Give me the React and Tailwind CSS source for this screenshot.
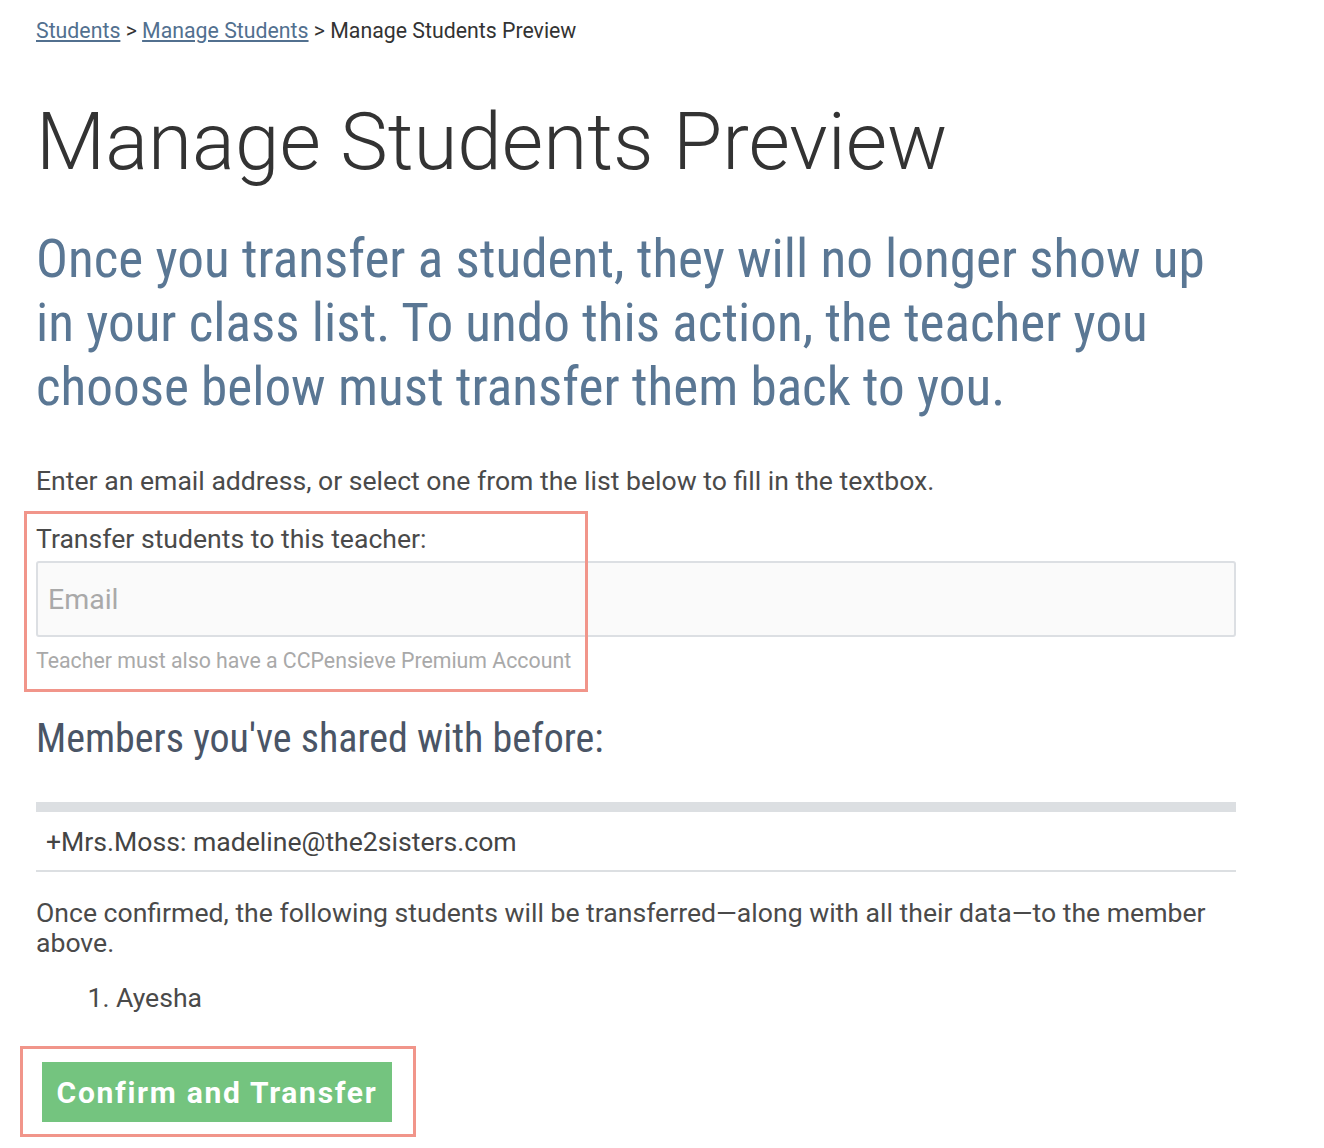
import React from "react";

export default function App() {
  return (
    <div className="min-h-[1148px] w-full bg-white font-['Roboto',sans-serif] text-[#4a4a4a]">
      <div className="w-[1236px] pl-9">
        <nav className="pt-[19px] text-[21.3px] leading-6 text-[#333]">
          <a href="#" className="text-[#52708f] underline underline-offset-2">Students</a>
          <span> &gt; </span>
          <a href="#" className="text-[#52708f] underline underline-offset-2">Manage Students</a>
          <span> &gt; Manage Students Preview</span>
        </nav>

        <h1 className="mt-[59px] text-[80px] font-light leading-none text-[#333]">Manage Students Preview</h1>

        <h2 className="mt-[45px] w-[1190px] font-['Roboto_Condensed',Roboto,sans-serif] text-[53.2px] leading-[64px] text-[#5a7794]">
          Once you transfer a student, they will no longer show up in your class list. To undo this action, the teacher you choose below must transfer them back to you.
        </h2>

        <p className="mt-[47px] text-[26.6px] leading-[30px]">Enter an email address, or select one from the list below to fill in the textbox.</p>

        <div className="relative mt-[28px]">
          <label className="block text-[26.6px] leading-[30px]">Transfer students to this teacher:</label>
          <input
            type="text"
            placeholder="Email"
            className="mt-[7px] block h-[76px] w-full rounded-[3px] border-2 border-[#dcdfe3] bg-[#fafafa] px-[10px] text-[28.5px] text-[#4a4a4a] placeholder:text-[#a9a9a9] outline-none"
          />
          <p className="mt-[12px] text-[21.3px] leading-6 text-[#a9a9a9]">Teacher must also have a CCPensieve Premium Account</p>
          <div className="pointer-events-none absolute left-[-12px] top-[-13px] h-[181px] w-[564px] border-[3px] border-[#f1958a]"></div>
        </div>

        <h3 className="mt-[42px] font-['Roboto_Condensed',Roboto,sans-serif] text-[40px] leading-[48px] text-[#4a5566]">Members you've shared with before:</h3>

        <div className="mt-[39px] border-t-[10px] border-[#dcdfe2]">
          <div className="border-b-2 border-[#dcdfe2] pl-[10px] pb-[13px] pt-[15px] text-[26.6px] leading-[30px] text-[#444]">+Mrs.Moss: madeline@the2sisters.com</div>
        </div>

        <p className="mt-[26px] text-[26.6px] leading-[30px]">Once confirmed, the following students will be transferred—along with all their data—to the member above.</p>

        <ol className="mt-[25px] list-decimal pl-[80px] text-[26.6px] leading-[30px]">
          <li>Ayesha</li>
        </ol>

        <div className="relative mt-[49px] pl-[6px]">
          <button className="h-[60px] w-[350px] bg-[#74c47f] text-[30px] font-bold tracking-[1.7px] text-white">Confirm and Transfer</button>
          <div className="pointer-events-none absolute left-[-16px] top-[-16px] h-[91px] w-[396px] border-[3px] border-[#f1958a]"></div>
        </div>
      </div>
    </div>
  );
}
